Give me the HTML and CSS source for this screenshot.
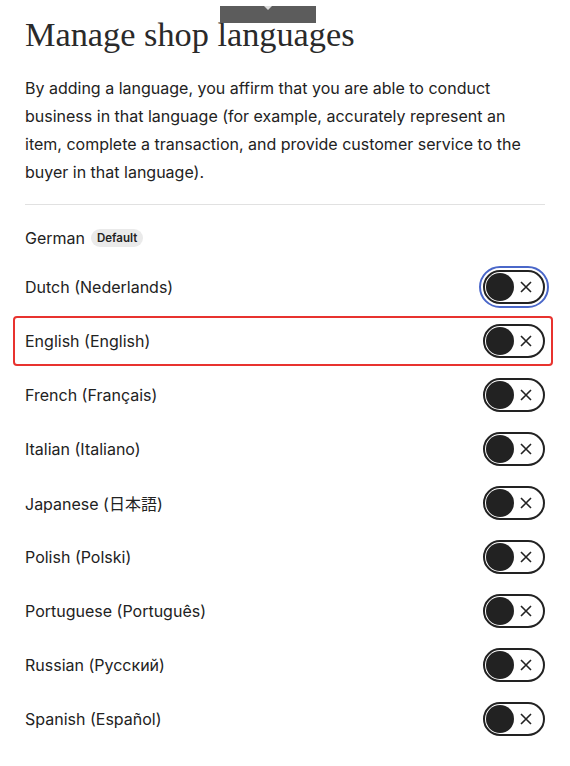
FILE: index.html
```html
<!DOCTYPE html>
<html>
<head>
<meta charset="utf-8">
<link rel="stylesheet" href="styles.css">
</head>
<body>
<div class="tip"><span class="tip-arrow"></span></div>
<main class="panel">
  <h1 class="title">Manage shop languages</h1>
  <p class="intro">By adding a language, you affirm that you are able to conduct business in that language (for example, accurately represent an item, complete a transaction, and provide customer service to the buyer in that language).</p>
  <hr class="divider">
  <div class="row row-default">
    <span class="lang">German</span>
    <span class="badge">Default</span>
  </div>
  <ul class="list">
    <li class="row"><span class="lang">Dutch (Nederlands)</span><span class="toggle focused"><span class="knob"></span><svg class="x" viewBox="0 0 14 14"><path d="M2 2L12 12M12 2L2 12"/></svg></span></li>
    <li class="row highlight"><span class="lang">English (English)</span><span class="toggle"><span class="knob"></span><svg class="x" viewBox="0 0 14 14"><path d="M2 2L12 12M12 2L2 12"/></svg></span></li>
    <li class="row"><span class="lang">French (Français)</span><span class="toggle"><span class="knob"></span><svg class="x" viewBox="0 0 14 14"><path d="M2 2L12 12M12 2L2 12"/></svg></span></li>
    <li class="row"><span class="lang">Italian (Italiano)</span><span class="toggle"><span class="knob"></span><svg class="x" viewBox="0 0 14 14"><path d="M2 2L12 12M12 2L2 12"/></svg></span></li>
    <li class="row"><span class="lang">Japanese (日本語)</span><span class="toggle"><span class="knob"></span><svg class="x" viewBox="0 0 14 14"><path d="M2 2L12 12M12 2L2 12"/></svg></span></li>
    <li class="row"><span class="lang">Polish (Polski)</span><span class="toggle"><span class="knob"></span><svg class="x" viewBox="0 0 14 14"><path d="M2 2L12 12M12 2L2 12"/></svg></span></li>
    <li class="row"><span class="lang">Portuguese (Português)</span><span class="toggle"><span class="knob"></span><svg class="x" viewBox="0 0 14 14"><path d="M2 2L12 12M12 2L2 12"/></svg></span></li>
    <li class="row"><span class="lang">Russian (Русский)</span><span class="toggle"><span class="knob"></span><svg class="x" viewBox="0 0 14 14"><path d="M2 2L12 12M12 2L2 12"/></svg></span></li>
    <li class="row"><span class="lang">Spanish (Español)</span><span class="toggle"><span class="knob"></span><svg class="x" viewBox="0 0 14 14"><path d="M2 2L12 12M12 2L2 12"/></svg></span></li>
  </ul>
</main>
</body>
</html>
```
FILE: styles.css
```css
html, body {
  margin: 0;
  padding: 0;
  background: #fff;
}
body {
  font-family: Inter, "Noto Sans CJK JP", sans-serif;
  color: #222;
  position: relative;
}
.tip {
  position: absolute;
  left: 220px;
  top: 6px;
  width: 96px;
  height: 17px;
  background: #5c5c5c;
}
.tip-arrow {
  position: absolute;
  left: 44px;
  top: 0;
  width: 0;
  height: 0;
  border-left: 4px solid transparent;
  border-right: 4px solid transparent;
  border-top: 4px solid #ddd;
}
.panel {
  padding: 14px 25px 0 25px;
  width: 520px;
}
.title {
  margin: 0;
  font-family: "Liberation Serif", serif;
  font-weight: normal;
  font-size: 34.3px;
  line-height: 40px;
  color: #2a2a2a;
}
.intro {
  margin: 20px 0 0 0;
  font-size: 16px;
  line-height: 28px;
  color: #222;
}
.divider {
  margin: 18px 0 0 0;
  border: 0;
  border-top: 1px solid #e1e1e1;
}
.row {
  display: flex;
  align-items: center;
  height: 54px;
  font-size: 16px;
  position: relative;
}
.row-default {
  margin-top: 5px;
  gap: 6px;
  height: 56px;
}
.list {
  list-style: none;
  margin: -6px 0 0 0;
  padding: 0;
}
.list .row {
  justify-content: space-between;
}
.lang {
  color: #222;
}
.badge {
  font-size: 11.5px;
  font-weight: 600;
  background: #eaeaea;
  border-radius: 9px;
  padding: 2px 6px;
  line-height: 14px;
}
.toggle {
  box-sizing: border-box;
  width: 62px;
  height: 34px;
  border: 2px solid #222;
  border-radius: 17px;
  display: flex;
  align-items: center;
  padding: 0 0 0 1px;
  gap: 5px;
}
.toggle.focused {
  outline: 2px solid #4a67c9;
  outline-offset: 2px;
}
.knob {
  width: 28px;
  height: 28px;
  border-radius: 50%;
  background: #222;
}
.x {
  width: 14px;
  height: 14px;
  stroke: #222;
  stroke-width: 1.6;
  fill: none;
}
.highlight::after {
  content: "";
  position: absolute;
  left: -12px;
  right: -8px;
  top: 2px;
  bottom: 2px;
  border: 2px solid #e8332f;
  border-radius: 4px;
}
```
